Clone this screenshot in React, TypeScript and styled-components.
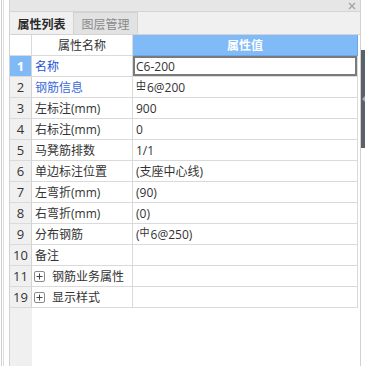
import React from "react";
import styled, { createGlobalStyle } from "styled-components";

const Global = createGlobalStyle`
  html, body { margin: 0; padding: 0; background: #ffffff; }
  body { font-family: "Open Sans", "Noto Sans CJK SC", sans-serif; }
`;

const Page = styled.div`
  display: flex;
  width: 365px;
  height: 366px;
  overflow: hidden;
  background: #ffffff;
`;

const Gutter = styled.div`
  width: 9px;
  display: flex;
  flex-shrink: 0;
`;

const GutterLine = styled.div<{ $tone: string; $ml: number }>`
  width: 1px;
  margin-left: ${(p) => p.$ml}px;
  background: ${(p) => p.$tone};
`;

const Panel = styled.div`
  width: 350px;
  flex-shrink: 0;
  border-left: 1px solid #d2d2d2;
  border-right: 1px solid #d2d2d2;
  display: flex;
  flex-direction: column;
`;

const TitleBar = styled.div`
  height: 11px;
  background: #e6e6e6;
  border-bottom: 1px solid #d4d4d4;
  display: flex;
  justify-content: flex-end;
  align-items: center;
  padding-right: 4px;
`;

const CloseIcon = styled.svg`
  width: 8px;
  height: 8px;
  margin-top: 1px;
`;

const TabBar = styled.div`
  height: 22px;
  background: #f0f0f0;
  border-bottom: 1px solid #d3d3d3;
  display: flex;
  align-items: stretch;
`;

const Tab = styled.div<{ $active?: boolean }>`
  width: 64px;
  box-sizing: border-box;
  display: flex;
  align-items: center;
  justify-content: center;
  font-family: "Noto Sans CJK SC", sans-serif;
  font-size: 12px;
  font-weight: ${(p) => (p.$active ? 700 : 400)};
  color: ${(p) => (p.$active ? "#2a2a2a" : "#8a8a8a")};
  background: ${(p) => (p.$active ? "#f0f0f0" : "#e2e2e2")};
  border-right: 1px solid #d3d3d3;
  border-top: ${(p) => (p.$active ? "none" : "1px solid #d3d3d3")};
`;

const Body = styled.div`
  flex: 1;
  display: flex;
  flex-direction: column;
`;

const Grid = styled.div`
  display: grid;
  grid-template-columns: 22px 101px 225px;
  grid-auto-rows: 21px;
`;

const Cell = styled.div<{ $align?: string }>`
  box-sizing: border-box;
  border-right: 1px solid #dadada;
  border-bottom: 1px solid #dadada;
  display: flex;
  align-items: center;
  justify-content: ${(p) => p.$align || "flex-start"};
  padding-left: 3px;
  font-size: 12px;
  color: #333333;
  white-space: nowrap;
  overflow: hidden;
`;

const NumCell = styled(Cell)<{ $selected?: boolean }>`
  justify-content: center;
  padding-left: 0;
  font-size: 13px;
  background: ${(p) => (p.$selected ? "#80baf6" : "#f0f0f0")};
  color: ${(p) => (p.$selected ? "#ffffff" : "#333333")};
  font-weight: ${(p) => (p.$selected ? 700 : 400)};
  border-right-color: #d3d3d3;
`;

const HeadCell = styled(Cell)`
  justify-content: center;
  padding-left: 0;
  background: #ffffff;
  color: #333333;
`;

const HeadValue = styled(HeadCell)`
  background: #80bbf7;
  color: #ffffff;
  font-weight: 700;
  border-right-color: #6ea8ea;
  border-bottom-color: #6ea8ea;
`;

const NameCell = styled(Cell)<{ $blue?: string }>`
  color: ${(p) => p.$blue || "#333333"};
`;

const ValueCell = styled(Cell)<{ $editing?: boolean }>`
  ${(p) => (p.$editing ? `box-shadow: inset 0 0 0 2px #7a7a7a;` : "")}
`;

const Expander = styled.span`
  width: 11px;
  height: 11px;
  box-sizing: border-box;
  border: 1px solid #8a8a8a;
  border-radius: 2px;
  display: inline-flex;
  align-items: center;
  justify-content: center;
  margin-right: 7px;
  margin-left: -1px;
  background: #ffffff;
`;

const Steel = styled.span<{ $bar?: boolean }>`
  position: relative;
  display: inline-block;
  font-family: "Noto Sans CJK SC", sans-serif;
  font-size: 10px;
  line-height: 10px;
  margin-right: 1px;
  transform: translateY(-2px);
  ${(p) =>
    p.$bar
      ? `
    &::after {
      content: "";
      position: absolute;
      left: 1px;
      right: 1px;
      bottom: 0px;
      height: 1px;
      background: #333;
    }
  `
      : ""}
`;

const Filler = styled.div`
  flex: 1;
  display: flex;
`;

const FillerNum = styled.div`
  width: 22px;
  background: #f0f0f0;
`;

const RightStrip = styled.div`
  flex: 1;
  display: flex;
  flex-direction: column;
  padding-top: 50px;
`;

const Handle = styled.div`
  height: 98px;
  background: #5b6169;
  display: flex;
  align-items: center;
  justify-content: flex-end;
`;

const HandleNotch = styled.div`
  width: 0;
  height: 0;
  border-top: 3px solid transparent;
  border-bottom: 3px solid transparent;
  border-right: 3px solid #a8adb4;
`;

type Row = {
  n: string;
  name: React.ReactNode;
  value?: React.ReactNode;
  blue?: string;
  selected?: boolean;
  editing?: boolean;
};

const plus = (
  <Expander>
    <svg width="7" height="7" viewBox="0 0 7 7">
      <path d="M3.5 0.5v6M0.5 3.5h6" stroke="#444" strokeWidth="1" />
    </svg>
  </Expander>
);

const rows: Row[] = [
  { n: "1", name: "名称", value: "C6-200", blue: "#2354d6", selected: true, editing: true },
  {
    n: "2",
    name: "钢筋信息",
    blue: "#3a6ad8",
    value: (
      <>
        <Steel $bar>中</Steel>6@200
      </>
    ),
  },
  { n: "3", name: "左标注(mm)", value: "900" },
  { n: "4", name: "右标注(mm)", value: "0" },
  { n: "5", name: "马凳筋排数", value: "1/1" },
  { n: "6", name: "单边标注位置", value: "(支座中心线)" },
  { n: "7", name: "左弯折(mm)", value: "(90)" },
  { n: "8", name: "右弯折(mm)", value: "(0)" },
  {
    n: "9",
    name: "分布钢筋",
    value: (
      <>
        (<Steel>中</Steel>6@250)
      </>
    ),
  },
  { n: "10", name: "备注" },
  {
    n: "11",
    name: (
      <>
        {plus}钢筋业务属性
      </>
    ),
  },
  {
    n: "19",
    name: (
      <>
        {plus}显示样式
      </>
    ),
  },
];

export default function App() {
  return (
    <Page>
      <Global />
      <Gutter>
        <GutterLine $tone="#d0d0d0" $ml={1} />
        <GutterLine $tone="#dedede" $ml={1} />
      </Gutter>
      <Panel>
        <TitleBar>
          <CloseIcon viewBox="0 0 8 8">
            <path d="M1 1L7 7M7 1L1 7" stroke="#a0a0a0" strokeWidth="1.2" />
          </CloseIcon>
        </TitleBar>
        <TabBar>
          <Tab $active>属性列表</Tab>
          <Tab>图层管理</Tab>
        </TabBar>
        <Body>
          <Grid>
            <HeadCell />
            <HeadCell>属性名称</HeadCell>
            <HeadValue>属性值</HeadValue>
            {rows.map((r) => (
              <React.Fragment key={r.n}>
                <NumCell $selected={r.selected}>{r.n}</NumCell>
                <NameCell $blue={r.blue}>{r.name}</NameCell>
                <ValueCell $editing={r.editing}>{r.value}</ValueCell>
              </React.Fragment>
            ))}
          </Grid>
          <Filler>
            <FillerNum />
          </Filler>
        </Body>
      </Panel>
      <RightStrip>
        <Handle>
          <HandleNotch />
        </Handle>
      </RightStrip>
    </Page>
  );
}
